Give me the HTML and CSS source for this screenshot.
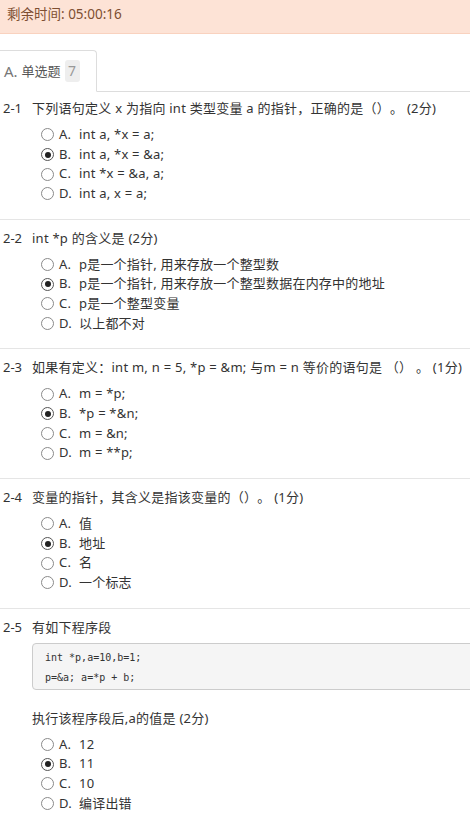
FILE: index.html
```html
<!DOCTYPE html>
<html lang="zh-CN">
<head>
    <meta charset="UTF-8">
    <meta name="viewport" content="width=device-width, initial-scale=1.0">
    <title>考试</title>
    <link rel="stylesheet" href="styles.css">
</head>
<body>
    <div class="page">
        <div class="timer">剩余时间: 05:00:16</div>

        <ul class="tabs">
            <li class="tab active">
                <span class="tab-letter">A.</span>
                <span class="tab-name">单选题</span>
                <span class="badge">7</span>
            </li>
        </ul>

        <div class="question first">
            <div class="q-head">
                <span class="q-num">2-1</span>
                <span class="q-text">下列语句定义 x 为指向 int 类型变量 a 的指针，正确的是（）。 (2分)</span>
            </div>
            <ul class="options">
                <li><span class="radio"></span><span class="opt-key">A.</span>int a, *x = a;</li>
                <li><span class="radio checked"></span><span class="opt-key">B.</span>int a, *x = &amp;a;</li>
                <li><span class="radio"></span><span class="opt-key">C.</span>int *x = &amp;a, a;</li>
                <li><span class="radio"></span><span class="opt-key">D.</span>int a, x = a;</li>
            </ul>
        </div>

        <div class="question">
            <div class="q-head">
                <span class="q-num">2-2</span>
                <span class="q-text">int *p 的含义是 (2分)</span>
            </div>
            <ul class="options">
                <li><span class="radio"></span><span class="opt-key">A.</span>p是一个指针, 用来存放一个整型数</li>
                <li><span class="radio checked"></span><span class="opt-key">B.</span>p是一个指针, 用来存放一个整型数据在内存中的地址</li>
                <li><span class="radio"></span><span class="opt-key">C.</span>p是一个整型变量</li>
                <li><span class="radio"></span><span class="opt-key">D.</span>以上都不对</li>
            </ul>
        </div>

        <div class="question">
            <div class="q-head">
                <span class="q-num">2-3</span>
                <span class="q-text">如果有定义：int m, n = 5, *p = &amp;m; 与m = n 等价的语句是 （） 。 (1分)</span>
            </div>
            <ul class="options">
                <li><span class="radio"></span><span class="opt-key">A.</span>m = *p;</li>
                <li><span class="radio checked"></span><span class="opt-key">B.</span>*p = *&amp;n;</li>
                <li><span class="radio"></span><span class="opt-key">C.</span>m = &amp;n;</li>
                <li><span class="radio"></span><span class="opt-key">D.</span>m = **p;</li>
            </ul>
        </div>

        <div class="question">
            <div class="q-head">
                <span class="q-num">2-4</span>
                <span class="q-text">变量的指针，其含义是指该变量的（）。 (1分)</span>
            </div>
            <ul class="options">
                <li><span class="radio"></span><span class="opt-key">A.</span>值</li>
                <li><span class="radio checked"></span><span class="opt-key">B.</span>地址</li>
                <li><span class="radio"></span><span class="opt-key">C.</span>名</li>
                <li><span class="radio"></span><span class="opt-key">D.</span>一个标志</li>
            </ul>
        </div>

        <div class="question">
            <div class="q-head">
                <span class="q-num">2-5</span>
                <span class="q-text">有如下程序段</span>
            </div>
            <div class="q-body">
                <pre class="code">int *p,a=10,b=1;
p=&amp;a; a=*p + b;</pre>
                <p class="q-sub">执行该程序段后,a的值是 (2分)</p>
            </div>
            <ul class="options">
                <li><span class="radio"></span><span class="opt-key">A.</span>12</li>
                <li><span class="radio checked"></span><span class="opt-key">B.</span>11</li>
                <li><span class="radio"></span><span class="opt-key">C.</span>10</li>
                <li><span class="radio"></span><span class="opt-key">D.</span>编译出错</li>
            </ul>
        </div>
    </div>
</body>
</html>
```

FILE: styles.css
```css
html {
    overflow: hidden;
}
body {
    margin: 0;
    font-family: "Noto Sans", "Noto Sans CJK SC", sans-serif;
    font-size: 13px;
    color: #333;
    background-color: #fff;
    text-spacing-trim: space-all;
}
.page {
    width: 520px;
}
.timer {
    background-color: #fde3d6;
    border-bottom: 1px solid #f9d2bf;
    color: #7e4f32;
    font-size: 13.5px;
    line-height: 20px;
    padding: 4px 7px 9px;
}
.tabs {
    list-style: none;
    margin: 16px 0 0;
    padding: 0;
    display: flex;
    border-bottom: 1px solid #ddd;
}
.tab {
    display: flex;
    align-items: center;
    gap: 4px;
    margin-bottom: -1px;
    padding: 9px 16px 9px 4px;
    line-height: 20px;
    border: 1px solid #ddd;
    border-left: none;
    border-bottom-color: #fff;
    border-radius: 0 4px 0 0;
    background-color: #fff;
    color: #555;
}
.tab-letter {
    font-size: 15px;
    color: #777;
}
.badge {
    display: inline-block;
    min-width: 15px;
    line-height: 22px;
    text-align: center;
    background-color: #eee;
    color: #999;
    font-size: 14px;
    border-radius: 3px;
}
.question {
    padding: 8px 0 15px;
    border-top: 1px solid #e5e5e5;
}
.question.first {
    border-top: none;
    padding-top: 6px;
}
.q-head {
    display: flex;
    line-height: 20px;
    white-space: nowrap;
}
.q-num {
    width: 29px;
    padding-left: 3px;
    flex-shrink: 0;
}
.q-text {
    letter-spacing: 0.25px;
}
.q-body {
    margin: 6px 0 0 32px;
}
.code {
    margin: 0;
    padding: 4px 12px 1px;
    background-color: #f5f5f5;
    border: 1px solid #ccc;
    border-radius: 4px;
    font-family: "DejaVu Sans Mono", monospace;
    font-size: 10px;
    line-height: 20px;
    color: #333;
}
.q-sub {
    margin: 18px 0 0;
    line-height: 20px;
    letter-spacing: 0.25px;
}
.options {
    list-style: none;
    margin: 7px 0 0;
    padding: 0 0 0 41px;
}
.options li {
    display: flex;
    align-items: center;
    line-height: 19.67px;
    white-space: nowrap;
    letter-spacing: 0.2px;
}
.radio {
    width: 11px;
    height: 11px;
    border: 1px solid #8a8a8a;
    border-radius: 50%;
    margin-right: 5px;
    display: flex;
    align-items: center;
    justify-content: center;
    flex-shrink: 0;
}
.radio.checked {
    border-color: #555;
}
.radio.checked::after {
    content: "";
    width: 6px;
    height: 6px;
    border-radius: 50%;
    background-color: #222;
}
.opt-key {
    width: 20px;
}
```
